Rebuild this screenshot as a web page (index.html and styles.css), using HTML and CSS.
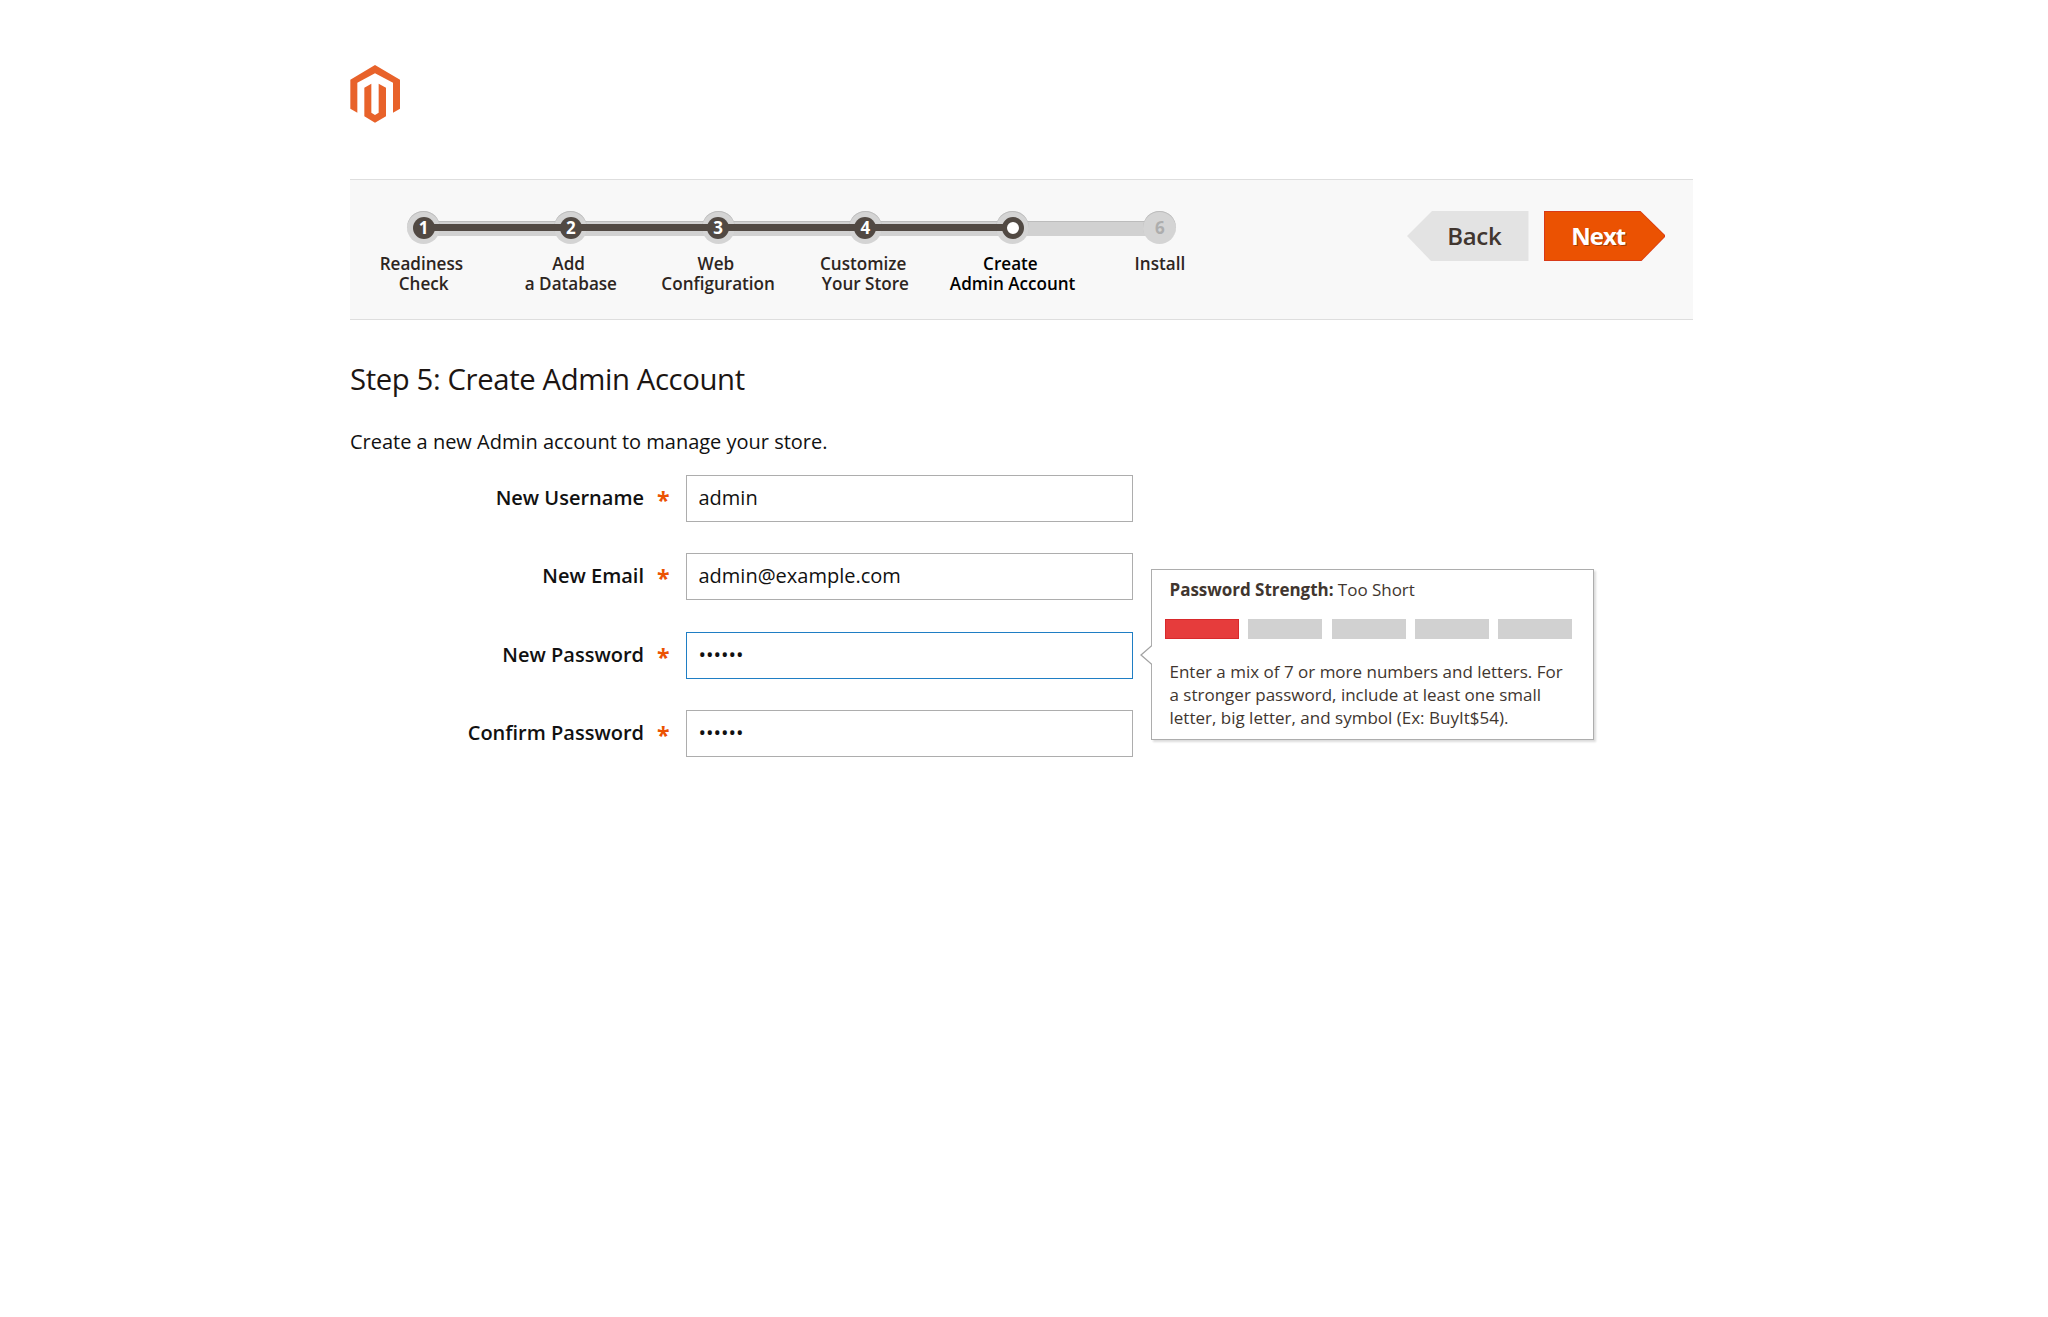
FILE: index.html
```html
<!DOCTYPE html>
<html lang="en">
<head>
<meta charset="utf-8">
<title>Create Admin Account</title>
<link rel="stylesheet" href="styles.css">
</head>
<body>
<main class="page">
  <header class="header">
    <svg class="logo" viewBox="60 44 150 174" aria-label="Magento"><path d="M135 44 210 88V175L189 187V97L135 69 82 97V187L61 175V88Z"/><path d="M103 112 124 100V187L135 194 146 187V100L168 112V198L135 217 103 198Z"/></svg>
  </header>
  <nav class="wizard">
    <ol class="steps">
      <li class="step done"><span class="dot"><b>1</b></span><span class="label">Readiness 
Check</span></li>
      <li class="step done"><span class="dot"><b>2</b></span><span class="label">Add 
a Database</span></li>
      <li class="step done"><span class="dot"><b>3</b></span><span class="label">Web 
Configuration</span></li>
      <li class="step done"><span class="dot"><b>4</b></span><span class="label">Customize 
Your Store</span></li>
      <li class="step current"><span class="dot"><b></b></span><span class="label">Create 
Admin Account</span></li>
      <li class="step todo"><span class="dot"><b>6</b></span><span class="label">Install</span></li>
    </ol>
    <div class="actions">
      <button class="btn back" type="button">Back</button>
      <button class="btn next" type="button"><span class="face">Next</span></button>
    </div>
  </nav>
  <h1 class="title">Step 5: Create Admin Account</h1>
  <p class="intro">Create a new Admin account to manage your store.</p>
  <form class="form">
    <div class="row"><label class="name" for="user">New Username</label><span class="req">*</span><input class="field" id="user" value="admin"></div>
    <div class="row"><label class="name" for="mail">New Email</label><span class="req">*</span><input class="field" id="mail" value="admin@example.com"></div>
    <div class="row"><label class="name" for="pass">New Password</label><span class="req">*</span><div class="field focused">••••••</div>
      <aside class="tip">
        <svg class="arrow" viewBox="0 0 12 20"><path d="M12 0.5 1 10 12 19.5"/></svg>
        <p class="strength"><strong>Password Strength:</strong> Too Short</p>
        <div class="meter"><i class="on"></i><i></i><i></i><i></i><i></i></div>
        <p class="hint">Enter a mix of 7 or more numbers and letters. For<br>a stronger password, include at least one small<br>letter, big letter, and symbol (Ex: BuyIt$54).</p>
      </aside>
    </div>
    <div class="row"><label class="name" for="again">Confirm Password</label><span class="req">*</span><div class="field">••••••</div></div>
  </form>
</main>
</body>
</html>
```
FILE: styles.css
```css
* { box-sizing: border-box; }
body { margin: 0; background: #fff; color: #111; font-family: "Open Sans", "Noto Sans", sans-serif; }
.page { width: 1343px; margin-left: 350px; }
.header { height: 179px; padding-top: 65px; }
.logo { display: block; width: 50px; height: 58px; fill: #e8622a; }

.wizard { display: flex; justify-content: space-between; height: 141px; padding: 31px 28px 0 0; background: #f8f8f8; border-top: 1px solid #dedede; border-bottom: 1px solid #dedede; }
.steps { display: flex; margin: 0; padding: 0; list-style: none; }
.step { position: relative; display: flex; flex-direction: column; align-items: center; width: 147.25px; }
.step + .step::before { content: ""; position: absolute; top: 10px; right: 73px; width: 147px; height: 14px; background: #d1d1d1; border-top: 1px solid #bcbcbc; }
.step.done + .step::after { content: ""; position: absolute; z-index: 2; top: 13px; right: 80px; width: 134px; height: 7px; background: #514943; }
.dot { position: relative; z-index: 1; display: grid; place-items: center; width: 33px; height: 33px; border-radius: 50%; background: #d4d4d4; box-shadow: inset 0 1px 0 #bcbcbc; }
.dot b { display: grid; place-items: center; width: 22px; height: 22px; border-radius: 50%; color: #fff; background: #514943; font-size: 17px; line-height: 22px; font-weight: 700; }
.current .dot b { background: #fff; border: 5.5px solid #514943; }
.todo .dot b { background: none; color: #adadad; }
.label { margin-top: 10px; color: #2d2521; font-size: 17.1px; line-height: 20px; font-weight: 600; text-align: center; white-space: pre; }
.current .label { color: #000; }

.actions { display: flex; gap: 15px; }
.btn { width: 121.5px; height: 50px; padding: 0; border: 0; font-family: inherit; font-size: 24px; font-weight: 600; line-height: 48px; }
.back { color: #41362f; background: #e3e3e3; padding-left: 13px; letter-spacing: -.3px; clip-path: polygon(0 50%, 25px 0, 100% 0, 100% 100%, 24px 100%); }
.next { background: #d83a18; padding: 1px; clip-path: polygon(0 0, 97px 0, 100% 24px, 100% 26px, 98px 100%, 0 100%); }
.face { display: block; height: 48px; padding-right: 12px; background: #eb5202; color: #fff; font-weight: 700; letter-spacing: -1px; text-shadow: 1px 1px 0 #a33a05; clip-path: polygon(0 0, 96px 0, 100% 23px, 100% 25px, 97px 100%, 0 100%); }

.title { margin: 39px 0 0; font-size: 29.3px; line-height: 40px; font-weight: 400; letter-spacing: -.38px; color: #1c1512; white-space: nowrap; }
.intro { margin: 29px 0 0; font-size: 20px; line-height: 28px; letter-spacing: -.01px; white-space: nowrap; }
.form { display: grid; gap: 31.6px; margin-top: 18.6px; }
.row { position: relative; display: flex; align-items: flex-start; height: 47px; }
.name { width: 294px; text-align: right; font-size: 20px; line-height: 45px; font-weight: 600; white-space: nowrap; }
.req { width: 42px; padding-left: 13px; color: #eb5202; font-size: 23px; line-height: 50px; font-weight: 700; }
.field { width: 447px; height: 47px; padding: 0 11.5px 2px; border: 1.5px solid #adadad; border-radius: 0; background: #fff; color: #111; font: 20px/43px "Open Sans", sans-serif; outline: 0; }
.focused { border-color: #1f7ec4; }

.tip { position: absolute; left: 801px; top: -63px; width: 442.5px; height: 171.5px; padding: 8px 14px; border: 1.5px solid #adadad; background: #fff; box-shadow: 2px 2px 2px rgba(0, 0, 0, .14); color: #41362f; font-size: 17px; line-height: 23px; white-space: nowrap; }
.arrow { position: absolute; left: -12px; top: 75px; width: 12px; height: 20px; fill: #fff; stroke: #a3a3a3; stroke-width: 1.3; }
.strength { margin: 0 0 0 3.5px; letter-spacing: -.03px; }
.meter { display: flex; justify-content: space-between; width: 407px; margin: 18px 0 21.5px -1px; }
.meter i { width: 74px; height: 20px; background: #d1d1d1; }
.meter .on { background: #e63c3c; box-shadow: inset 0 0 0 1px #d8292c; }
.hint { margin: 0 0 0 3.5px; }
```
